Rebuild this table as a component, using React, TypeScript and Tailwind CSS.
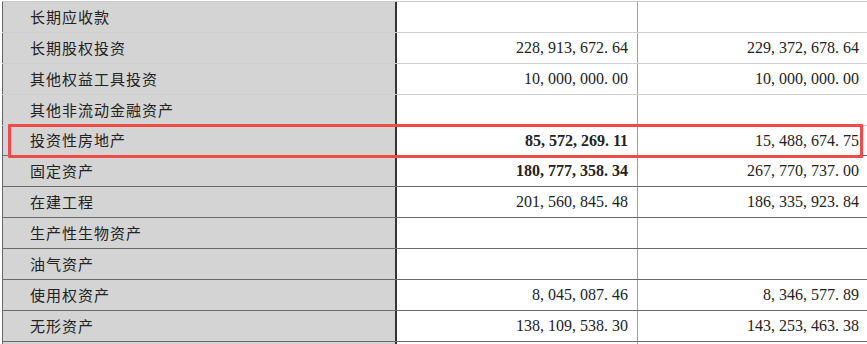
import React from "react";

type Row = { label: string; a: string; b: string; boldA?: boolean; h: number; dark?: boolean };

const rows: Row[] = [
  { label: "长期应收款", a: "", b: "", h: 31 },
  { label: "长期股权投资", a: "228, 913, 672. 64", b: "229, 372, 678. 64", h: 31 },
  { label: "其他权益工具投资", a: "10, 000, 000. 00", b: "10, 000, 000. 00", h: 31 },
  { label: "其他非流动金融资产", a: "", b: "", h: 31 },
  { label: "投资性房地产", a: "85, 572, 269. 11", b: "15, 488, 674. 75", boldA: true, h: 30, dark: true },
  { label: "固定资产", a: "180, 777, 358. 34", b: "267, 770, 737. 00", boldA: true, h: 31, dark: true },
  { label: "在建工程", a: "201, 560, 845. 48", b: "186, 335, 923. 84", h: 31, dark: true },
  { label: "生产性生物资产", a: "", b: "", h: 31, dark: true },
  { label: "油气资产", a: "", b: "", h: 31, dark: true },
  { label: "使用权资产", a: "8, 045, 087. 46", b: "8, 346, 577. 89", h: 31, dark: true },
  { label: "无形资产", a: "138, 109, 538. 30", b: "143, 253, 463. 38", h: 31, dark: true },
];

const heightCls: Record<number, string> = { 30: "h-[30px]", 31: "h-[31px]" };

export default function App() {
  return (
    <div className="w-[867px] h-[344px] bg-white overflow-hidden pt-[1px] pl-[2px]">
      <div className="relative w-[865px] border-t border-[#c8c8c8]">
        {rows.map((r, i) => (
          <div
            key={i}
            className={`flex ${heightCls[r.h]} border-b ${r.dark ? "border-[#6a6a6a]" : "border-[#cfcfcf]"}`}
          >
            <div className="w-[395px] bg-[#d4d4d4] border-l border-[#666] border-r-2 border-r-[#333] flex items-center pl-[27px] text-[15px] tracking-[1px] text-[#222] font-['Noto_Sans_CJK_SC',sans-serif]">
              {r.label}
            </div>
            <div
              className={`w-[241px] border-r border-[#a0a0a0] flex items-center justify-end pr-[9px] text-[16px] text-[#222] whitespace-pre font-['Liberation_Serif',serif] ${r.boldA ? "font-bold" : ""}`}
            >
              {r.a}
            </div>
            <div className="flex-1 flex items-center justify-end pr-[8px] text-[16px] text-[#222] whitespace-pre font-['Liberation_Serif',serif]">
              {r.b}
            </div>
          </div>
        ))}
        <div className="flex h-[10px]">
          <div className="w-[395px] bg-[#d4d4d4] border-l border-[#666] border-r-2 border-r-[#333]" />
          <div className="w-[241px] border-r border-[#a0a0a0]" />
        </div>
        <div className="absolute left-[6px] top-[122px] w-[855px] h-[34px] border-[3px] border-[#f04a4a] rounded-[1px]" />
      </div>
    </div>
  );
}
